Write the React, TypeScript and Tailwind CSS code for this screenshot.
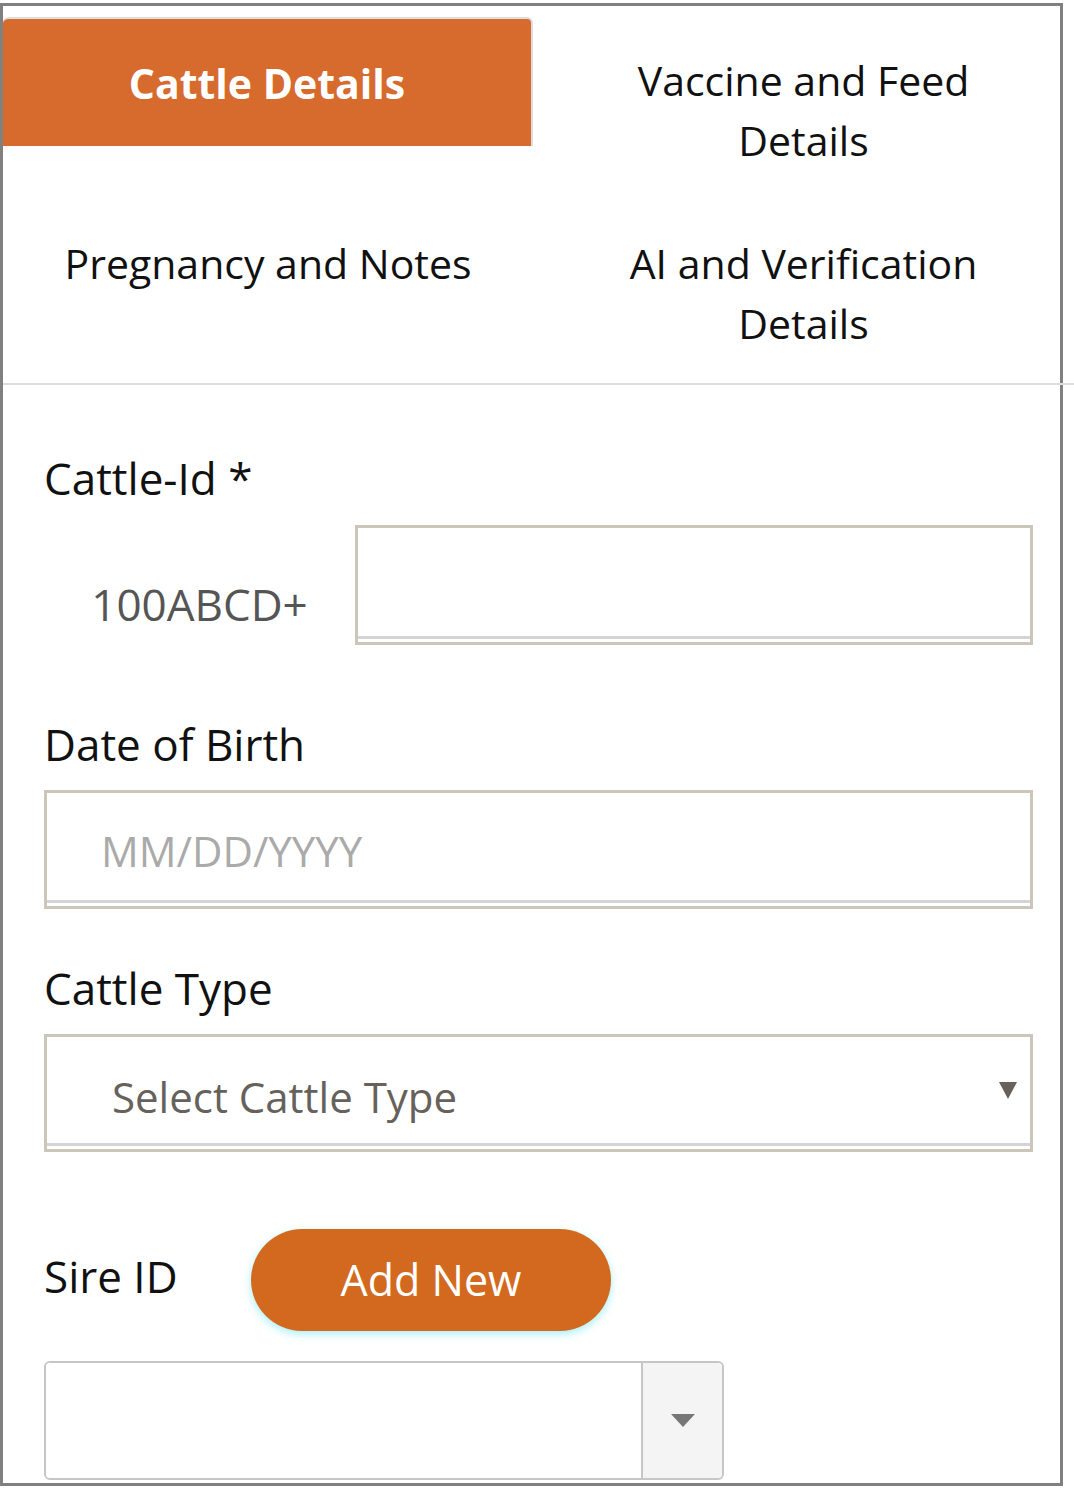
import React from 'react';

const tabs = [
  { label: 'Cattle Details', active: true },
  { label: 'Vaccine and Feed Details', active: false },
  { label: 'Pregnancy and Notes', active: false },
  { label: 'AI and Verification Details', active: false },
];

function BoxField({ children, height }: { children?: React.ReactNode; height: string }) {
  return (
    <div className={`flex flex-col border-[3px] border-[#ccc5b9] bg-white ${height}`}>
      <div className="flex-1 flex items-center">{children}</div>
      <div className="h-[3px] bg-[#d4d4d4]" />
      <div className="h-[3px]" />
    </div>
  );
}

export default function App() {
  return (
    <div
      className="w-[1074px] min-h-[1501px] bg-white pt-[3px] overflow-hidden"
      style={{ fontFamily: '"Open Sans", "Noto Sans", sans-serif' }}
    >
      <div className="w-[1063px] h-[1483px] border-[3px] border-[#808080] overflow-visible">
        {/* Tabs */}
        <div className="mt-[11px] w-[1071px] flex flex-wrap items-start border-b-2 border-[#dddddd]">
          {tabs.map(tab =>
            tab.active ? (
              <div
                key={tab.label}
                className="w-[530px] h-[129px] flex items-center justify-center bg-[#d76b2e] border-t-2 border-r-2 border-[#dddddd] rounded-t-[6px] text-white font-bold text-[41px] leading-[60px]"
              >
                {tab.label}
              </div>
            ) : (
              <div
                key={tab.label}
                className={`${tab.label === 'Pregnancy and Notes' ? 'w-[530px]' : 'w-[541px] px-[40px]'} pt-[33px] pb-[30px] text-center text-[41px] leading-[60px] text-[#111]`}
              >
                {tab.label}
              </div>
            )
          )}
        </div>

        {/* Form */}
        <div className="pl-[41px] pr-[27px]">
          <div className="mt-[69px] text-[44px] leading-[48px] text-[#111]">Cattle-Id *</div>
          <div className="mt-[23px] flex">
            <div className="w-[311px] flex items-center justify-center pt-[38px] text-[44px] text-[#555555]">
              100ABCD+
            </div>
            <div className="flex-1">
              <BoxField height="h-[120px]" />
            </div>
          </div>

          <div className="mt-[75px] text-[44px] leading-[48px] text-[#111]">Date of Birth</div>
          <div className="mt-[22px]">
            <BoxField height="h-[119px]">
              <span className="pl-[54px] pt-[8px] text-[42px] text-[#aaaaaa]">MM/DD/YYYY</span>
            </BoxField>
          </div>

          <div className="mt-[55px] text-[44px] leading-[48px] text-[#111]">Cattle Type</div>
          <div className="mt-[22px]">
            <BoxField height="h-[118px]">
              <div className="flex-1 flex items-center justify-between pl-[65px] pr-[13px]">
                <span className="pt-[12px] text-[42px] text-[#66615b]">Select Cattle Type</span>
                <svg width="18" height="17" viewBox="0 0 18 17">
                  <polygon points="0,0 18,0 9,17" fill="#66615b" />
                </svg>
              </div>
            </BoxField>
          </div>

          <div className="mt-[77px] flex items-center">
            <span className="w-[207px] text-[44px] text-[#111] -mt-[8px]">Sire ID</span>
            <button className="w-[360px] h-[102px] rounded-full bg-[#d2691e] text-white text-[43px] shadow-[0_3px_8px_rgba(0,210,235,0.35)]">
              Add New
            </button>
          </div>

          <div className="mt-[30px] w-[680px] h-[119px] flex border-2 border-[#c6c6c6] rounded-[6px] overflow-hidden">
            <div className="flex-1 bg-white" />
            <div className="w-[81px] bg-[#f4f4f4] border-l-2 border-[#c6c6c6] flex items-center justify-center">
              <svg width="24" height="13" viewBox="0 0 24 13">
                <polygon points="0,0 24,0 12,13" fill="#777777" />
              </svg>
            </div>
          </div>
        </div>
      </div>
    </div>
  );
}
